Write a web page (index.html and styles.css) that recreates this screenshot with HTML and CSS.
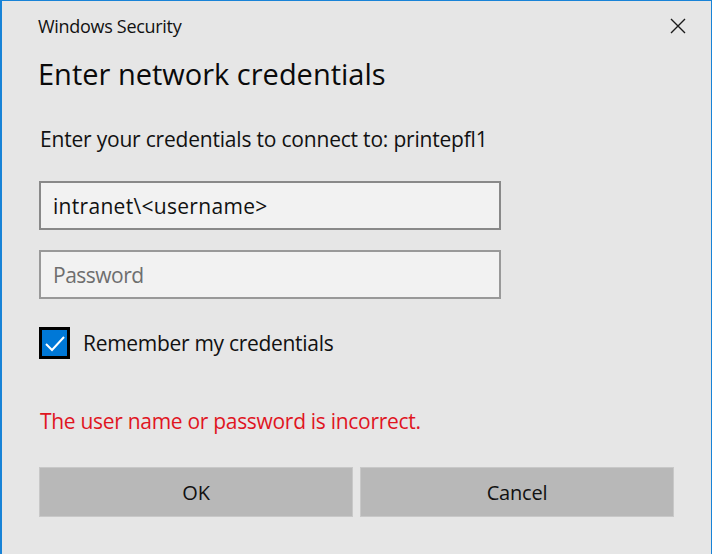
FILE: index.html
```html
<!DOCTYPE html>
<html>
<head>
<meta charset="utf-8">
<link rel="stylesheet" href="styles.css">
</head>
<body>
<div class="window">
  <div class="titlebar">
    <span class="app-title">Windows Security</span>
    <button class="close" aria-label="Close">
      <svg width="16" height="16" viewBox="0 0 16 16"><path d="M1 1 L15 15 M15 1 L1 15" stroke="#1a1a1a" stroke-width="1.4" fill="none"/></svg>
    </button>
  </div>
  <h1 class="heading">Enter network credentials</h1>
  <p class="prompt">Enter your credentials to connect to: printepfl1</p>
  <div class="field user"><span class="value">intranet\&lt;username&gt;</span></div>
  <div class="field pass"><span class="placeholder">Password</span></div>
  <label class="remember">
    <span class="checkbox">
      <svg width="25" height="26" viewBox="0 0 25 26"><path d="M4 14 L10 20 L22 7" stroke="#ffffff" stroke-width="2" fill="none"/></svg>
    </span>
    <span class="remember-text">Remember my credentials</span>
  </label>
  <p class="error">The user name or password is incorrect.</p>
  <div class="buttons">
    <button class="btn">OK</button>
    <button class="btn">Cancel</button>
  </div>
</div>
</body>
</html>
```
FILE: styles.css
```css
html, body {
  margin: 0;
  padding: 0;
}
body {
  width: 712px;
  height: 554px;
  overflow: hidden;
  font-family: "Open Sans", "Noto Sans", sans-serif;
  color: #111;
}
.window {
  box-sizing: border-box;
  width: 712px;
  height: 554px;
  background: #e6e6e6;
  border-top: 1px solid #1883d7;
  border-left: 2px solid #1883d7;
  border-right: 1px solid #1883d7;
  padding: 0 0 0 36px;
  display: flex;
  flex-direction: column;
}
.titlebar {
  display: flex;
  justify-content: space-between;
  align-items: center;
  height: 50px;
  padding-right: 25px;
}
.app-title {
  font-size: 18px;
  letter-spacing: -0.3px;
  margin-top: -1px;
}
.close {
  border: none;
  background: transparent;
  padding: 0;
  width: 16px;
  height: 16px;
  margin-top: -1px;
  display: flex;
}
.heading {
  margin: 0;
  font-weight: 400;
  font-size: 29px;
  letter-spacing: 0;
  line-height: 46px;
  height: 46px;
  color: #0a0a0a;
}
.prompt {
  margin: 28px 0 0 2px;
  font-size: 21px;
  line-height: 28px;
  letter-spacing: -0.2px;
}
.field {
  box-sizing: border-box;
  width: 462px;
  height: 49px;
  border: 2px solid #898989;
  background: #f2f2f2;
  display: flex;
  align-items: center;
  padding: 1px 0 0 12px;
  font-size: 21px;
  margin-left: 1px;
}
.value {
  letter-spacing: 0.3px;
}
.user {
  margin-top: 28px;
}
.pass {
  margin-top: 20px;
  border-color: #999999;
}
.placeholder {
  color: #6e6e6e;
  letter-spacing: -0.5px;
}
.remember {
  display: flex;
  align-items: center;
  margin-top: 28px;
  margin-left: 1px;
  height: 32px;
}
.checkbox {
  box-sizing: border-box;
  width: 31px;
  height: 32px;
  border: 3px solid #000;
  background: #0078d7;
  display: flex;
  align-items: center;
  justify-content: center;
}
.remember-text {
  margin-left: 13px;
  font-size: 21px;
  letter-spacing: -0.3px;
}
.error {
  margin: 48px 0 0 2px;
  font-size: 21px;
  line-height: 28px;
  color: #e0151f;
  letter-spacing: -0.3px;
}
.buttons {
  display: flex;
  gap: 7px;
  margin-top: 32px;
  margin-left: 1px;
}
.btn {
  box-sizing: border-box;
  width: 314px;
  height: 50px;
  background: #b8b8b8;
  border: 1px solid #c8c8c8;
  font-family: "Open Sans", "Noto Sans", sans-serif;
  font-size: 20px;
  letter-spacing: -0.2px;
  color: #111;
  padding: 0;
}
```
